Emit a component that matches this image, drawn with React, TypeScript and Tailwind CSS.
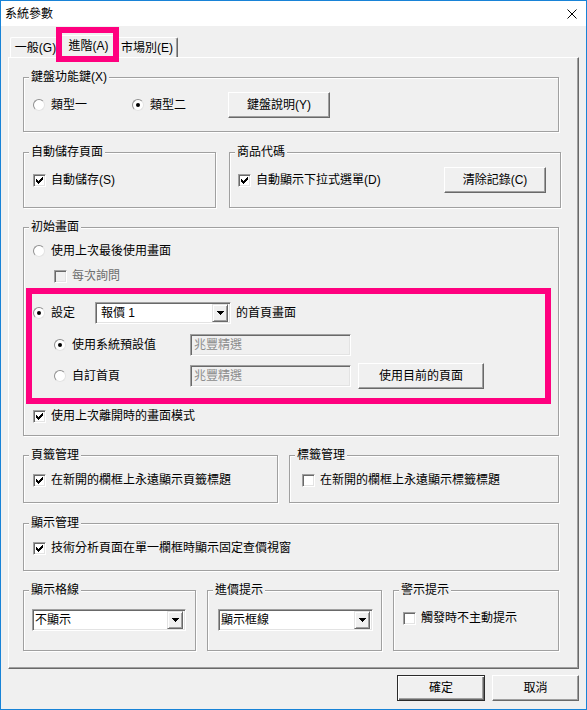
import React from 'react';
import clsx from 'clsx';

const GroupBox: React.FC<{ title: string; className?: string; children?: React.ReactNode }> = ({ title, className, children }) => (
  <div className={clsx('flex shrink-0 flex-col border border-[#a0a0a0] shadow-[inset_1px_1px_0_#fff,1px_1px_0_#fff]', className)}>
    <span className="-mt-[8px] ml-[5px] self-start bg-[#f0f0f0] px-[2px] leading-[14px]">{title}</span>
    {children}
  </div>
);

const Radio: React.FC<{ checked?: boolean; label: string; className?: string }> = ({ checked, label, className }) => (
  <div className={clsx('flex shrink-0 items-center gap-[6px]', className)}>
    <span className="flex h-[12px] w-[12px] shrink-0 items-center justify-center rounded-full border border-[#8f8f8f] border-b-[#e3e3e3] border-r-[#e3e3e3] bg-white">
      {checked && <span className="h-[4px] w-[4px] rounded-full bg-black" />}
    </span>
    <span className="leading-[14px]">{label}</span>
  </div>
);

const Check: React.FC<{ checked?: boolean; disabled?: boolean; label: string; className?: string }> = ({ checked, disabled, label, className }) => (
  <div className={clsx('flex shrink-0 items-center gap-[5px]', className)}>
    <span
      className={clsx(
        'flex h-[13px] w-[13px] shrink-0 items-center justify-center border border-[#a0a0a0] border-b-white border-r-white shadow-[inset_1px_1px_0_#696969,inset_-1px_-1px_0_#e3e3e3]',
        disabled ? 'bg-[#f0f0f0]' : 'bg-white'
      )}
    >
      {checked && (
        <svg width="7" height="7" viewBox="0 0 7 7" shapeRendering="crispEdges">
          <path d="M0 2 L2 4 L6 0 L7 0 L7 3 L2 7 L0 5 Z" fill="#000" />
        </svg>
      )}
    </span>
    <span className={clsx('leading-[14px]', disabled && 'text-[#6d6d6d]')}>{label}</span>
  </div>
);

const Button: React.FC<{ label: string; className?: string; isDefault?: boolean }> = ({ label, className, isDefault }) => (
  <div
    className={clsx(
      'flex shrink-0 items-center justify-center bg-[#f0f0f0] leading-[14px]',
      isDefault
        ? 'border border-[#2b2b2b] shadow-[inset_1px_1px_0_#fff,inset_-1px_-1px_0_#696969,inset_-2px_-2px_0_#a0a0a0]'
        : 'border border-white border-b-[#696969] border-r-[#696969] shadow-[inset_-1px_-1px_0_#a0a0a0]',
      className
    )}
  >
    {label}
  </div>
);

const Sunken: React.FC<{ className?: string; children?: React.ReactNode }> = ({ className, children }) => (
  <div className={clsx('flex shrink-0 items-center border border-[#a0a0a0] border-b-white border-r-white shadow-[inset_1px_1px_0_#696969,inset_-1px_-1px_0_#e3e3e3]', className)}>
    {children}
  </div>
);

const Combo: React.FC<{ value: string; className?: string; textClass?: string }> = ({ value, className, textClass }) => (
  <Sunken className={clsx('h-[22px] bg-white', className)}>
    <span className={clsx('flex-1 leading-[14px]', textClass)}>{value}</span>
    <span className="mr-[2px] flex h-[18px] w-[16px] items-center justify-center border border-[#e3e3e3] border-b-[#696969] border-r-[#696969] bg-[#f0f0f0] shadow-[inset_1px_1px_0_#fff,inset_-1px_-1px_0_#a0a0a0]">
      <svg width="7" height="4" viewBox="0 0 7 4" shapeRendering="crispEdges">
        <path d="M0 0 H7 L3.5 4 Z" fill="#000" />
      </svg>
    </span>
  </Sunken>
);

const TextBox: React.FC<{ value: string }> = ({ value }) => (
  <Sunken className="h-[22px] w-[161px] bg-[#f0f0f0] pl-[3px]">
    <span className="leading-[14px] text-[#8c8c8c]">{value}</span>
  </Sunken>
);

export default function App() {
  return (
    <div className="flex h-[710px] w-[587px] flex-col border border-[#1883d7] bg-[#f0f0f0] font-['Liberation_Sans','Noto_Sans_CJK_TC',sans-serif] text-[12px] text-black">
      {/* title bar */}
      <div className="flex h-[25px] shrink-0 items-center justify-between bg-white pl-[4px] pr-[9px]">
        <span className="leading-[14px]">系統參數</span>
        <svg width="10" height="10" viewBox="0 0 10 10">
          <path d="M0.5 0.5 L9.5 9.5 M9.5 0.5 L0.5 9.5" stroke="#000" strokeWidth="1" />
        </svg>
      </div>

      <div className="flex flex-col px-[7px] pt-[9px]">
        {/* tabs */}
        <div className="relative flex h-[22px] items-end">
          <div className="ml-[2px] flex h-[20px] w-[50px] items-center justify-center rounded-t-[2px] border-l border-t border-white border-r-[#696969] leading-[14px]">
            一般(G)
          </div>
          <div className="relative z-10 -mb-[1px] -ml-[2px] flex h-[23px] w-[61px] items-center justify-center rounded-t-[2px] border-l border-r border-t border-white border-r-[#696969] bg-[#f0f0f0] pb-[3px] leading-[14px]">
            進階(A)
          </div>
          <div className="-ml-[2px] flex h-[20px] w-[61px] items-center justify-center rounded-t-[2px] border-r border-t border-white border-r-[#696969] shadow-[inset_-1px_0_0_#a0a0a0] leading-[14px]">
            市場別(E)
          </div>
          <div className="pointer-events-none absolute left-[48px] top-[-8px] z-20 h-[35px] w-[63px] border-[6px] border-[#ff007f]" />
        </div>

        {/* tab panel */}
        <div className="flex h-[612px] w-[571px] flex-col border border-white border-b-[#696969] border-r-[#696969] pl-[14px] shadow-[inset_-1px_-1px_0_#a0a0a0]">
          <GroupBox title="鍵盤功能鍵(X)" className="mt-[19px] h-[55px] w-[536px]">
            <div className="mt-[8px] flex h-[26px] items-center pl-[9px]">
              <Radio label="類型一" className="w-[99px]" />
              <Radio label="類型二" checked className="w-[96px]" />
              <Button label="鍵盤說明(Y)" className="h-[26px] w-[102px]" />
            </div>
          </GroupBox>

          <div className="mt-[20px] flex">
            <GroupBox title="自動儲存頁面" className="h-[56px] w-[193px]">
              <div className="mt-[8px] flex h-[26px] items-center pl-[9px]">
                <Check label="自動儲存(S)" checked />
              </div>
            </GroupBox>
            <GroupBox title="商品代碼" className="ml-[13px] h-[56px] w-[332px]">
              <div className="mt-[8px] flex h-[26px] items-center pl-[8px] pr-[14px]">
                <Check label="自動顯示下拉式選單(D)" checked className="flex-1" />
                <Button label="清除記錄(C)" className="h-[26px] w-[102px]" />
              </div>
            </GroupBox>
          </div>

          <GroupBox title="初始畫面" className="mt-[19px] h-[209px] w-[536px]">
            <div className="mt-[7px] flex h-[20px] items-center pl-[9px]">
              <Radio label="使用上次最後使用畫面" />
            </div>
            <div className="mt-[5px] flex h-[20px] items-center pl-[30px]">
              <Check label="每次詢問" disabled />
            </div>
            <div className="ml-[2px] mt-[2px] flex h-[116px] w-[525px] flex-col border-[6px] border-[#ff007f]">
              <div className="mt-[8px] flex h-[22px] items-center pl-[1px]">
                <Radio label="設定" checked className="w-[62px]" />
                <Combo value="報價 1" className="w-[136px]" textClass="pl-[5px]" />
                <span className="ml-[5px] leading-[14px]">的首頁畫面</span>
              </div>
              <div className="mt-[10px] flex h-[22px] items-center pl-[22px]">
                <Radio label="使用系統預設值" checked className="w-[136px]" />
                <TextBox value="兆豐精選" />
              </div>
              <div className="mt-[7px] flex h-[26px] items-center pl-[22px]">
                <Radio label="自訂首頁" className="w-[136px]" />
                <TextBox value="兆豐精選" />
                <Button label="使用目前的頁面" className="ml-[7px] h-[26px] w-[126px]" />
              </div>
            </div>
            <div className="mt-[2px] flex h-[20px] items-center pl-[9px]">
              <Check label="使用上次離開時的畫面模式" checked />
            </div>
          </GroupBox>

          <div className="mt-[19px] flex">
            <GroupBox title="頁籤管理" className="h-[48px] w-[255px]">
              <div className="mt-[8px] flex h-[20px] items-center pl-[9px]">
                <Check label="在新開的欄框上永遠顯示頁籤標題" checked />
              </div>
            </GroupBox>
            <GroupBox title="標籤管理" className="ml-[11px] h-[48px] w-[270px]">
              <div className="mt-[8px] flex h-[20px] items-center pl-[12px]">
                <Check label="在新開的欄框上永遠顯示標籤標題" />
              </div>
            </GroupBox>
          </div>

          <GroupBox title="顯示管理" className="mt-[20px] h-[48px] w-[536px]">
            <div className="mt-[8px] flex h-[20px] items-center pl-[9px]">
              <Check label="技術分析頁面在單一欄框時顯示固定查價視窗" checked />
            </div>
          </GroupBox>

          <div className="mt-[19px] flex">
            <GroupBox title="顯示格線" className="h-[61px] w-[173px]">
              <Combo value="不顯示" className="ml-[8px] mt-[12px] w-[154px]" textClass="pl-[2px]" />
            </GroupBox>
            <GroupBox title="進價提示" className="ml-[11px] h-[61px] w-[175px]">
              <Combo value="顯示框線" className="ml-[10px] mt-[12px] w-[155px]" textClass="pl-[2px]" />
            </GroupBox>
            <GroupBox title="警示提示" className="ml-[11px] h-[61px] w-[166px]">
              <div className="mt-[10px] flex h-[22px] items-center pl-[9px]">
                <Check label="觸發時不主動提示" />
              </div>
            </GroupBox>
          </div>
        </div>

        {/* dialog buttons */}
        <div className="mt-[6px] flex justify-end gap-[7px]">
          <Button label="確定" isDefault className="h-[26px] w-[88px]" />
          <Button label="取消" className="h-[26px] w-[87px]" />
        </div>
      </div>
    </div>
  );
}
